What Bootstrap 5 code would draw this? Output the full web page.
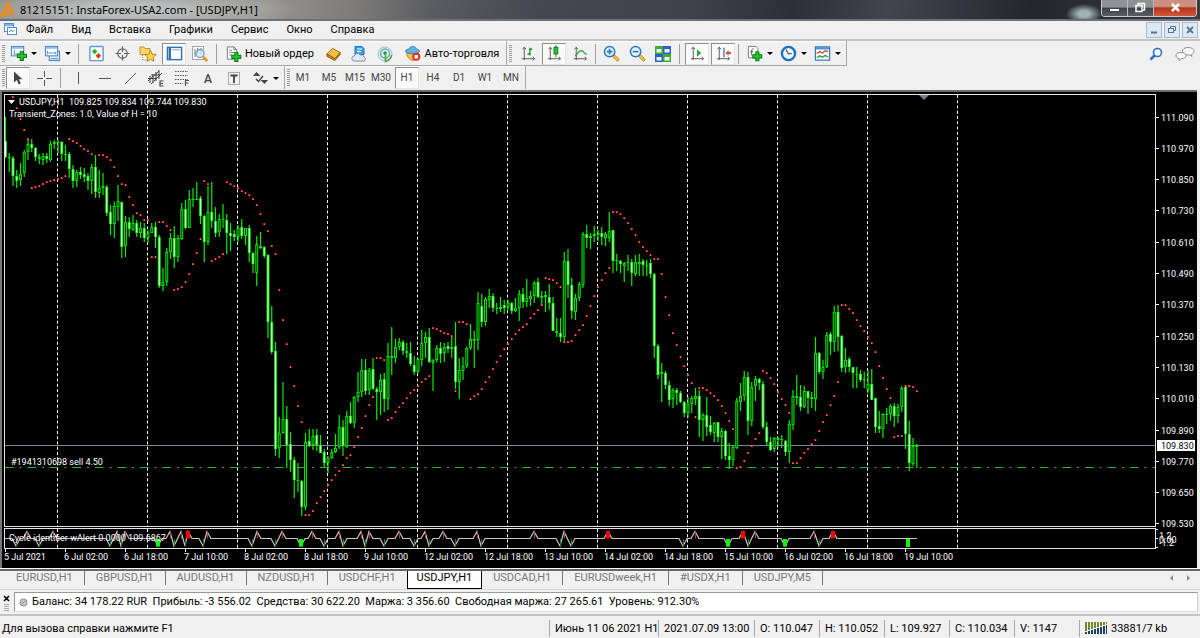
<!DOCTYPE html>
<html lang="ru">
<head>
<meta charset="utf-8">
<meta name="viewport" content="width=device-width, initial-scale=1">
<title>81215151: InstaForex-USA2.com - [USDJPY,H1]</title>
<link href="https://cdn.jsdelivr.net/npm/bootstrap@5.3.0/dist/css/bootstrap.min.css" rel="stylesheet">
<style>
  :root { --face: #f0f0f0; --edge: #a8a8a8; --ui: Roboto, "Noto Sans", sans-serif; --num: Roboto, "Liberation Sans", sans-serif; }
  body { background: var(--face); color: #000; font: 11px/14px var(--ui); overflow-x: hidden; }
  button { font: inherit; color: inherit; background: none; border: 0; padding: 0; border-radius: 0; }
  svg { display: block; flex: none; }

  .titlebar { height: 21px; border-bottom: 2px solid #6d7076; overflow: hidden; color: #000;
    background: radial-gradient(ellipse 18px 10px at 1084px 14px, #9fb3b3 0 30%, transparent),
      radial-gradient(ellipse 170px 20px at 130px 10px, #c4c8c9cc 30%, transparent),
      linear-gradient(100deg, #8d8c88 0, #97958f 22%, #7b7a79 30%, #5b5c60 36%, #43474f 45%, #3e434d 57%, #2c2f38 66%, #41454d 74%, #24262d 86%, #3a3c42 100%); }
  .titlebar .caption { font: 11px/20px "Noto Sans", "Open Sans", sans-serif; white-space: pre; }
  .winbtns { height: 17px; border: 1px solid #c5c9ce; border-top: 0; border-radius: 0 0 4px 4px; overflow: hidden; margin-right: 3px; }
  .winbtns button { width: 26px; background: linear-gradient(#8f9196 0 45%, #3f4147 50%, #5a5d63); border-right: 1px solid #b6bac0; }
  .winbtns button:last-child { width: 42px; border: 0; background: linear-gradient(#cc8f82 0 40%, #b5361c 50%, #d4563a); }

  .menubar { height: 20px; border-bottom: 2px solid #c3c3c3; padding-left: 3px; }
  .menubar a { color: #000; text-decoration: none; line-height: 18px; }
  .menulist { gap: 18px; }
  .mdi { gap: 2px; margin: 1px 2px 0 0; }
  .mdi button { width: 16px; height: 16px; background: #dbe8f5; border: 1px solid #a9bccd; }

  .toolrow { height: 25px; }
  .toolrow.lower { height: 24px; }
  .toolset { height: 25px; border: 1px solid var(--edge); border-width: 0 1px 1px 0; padding: 1px 2px 0 2px; box-shadow: inset 0 1px #fff; }
  .toolset.second { border-bottom: 0; height: 23px; }
  .toolgroup { gap: 2px; }
  .grip { width: 3px; height: 18px; margin-right: 1px; background: repeating-linear-gradient(#9b9b9b 0 1px, #f0f0f0 1px 2px); }
  .tb { width: 24px; height: 22px; display: inline-flex; align-items: center; justify-content: center; flex: none; border: 1px solid transparent; }
  .tb.drop { width: 34px; gap: 4px; }
  .tb.drop::after { content: ""; border: 3px solid transparent; border-top-color: #000; border-bottom: 0; }
  .tb.order { width: 95px; gap: 3px; white-space: nowrap; }
  .tb.auto { width: 105px; gap: 4px; white-space: nowrap; }
  .tb.chat { width: 30px; }
  .tb.on { background: #fafafa; border-color: #8f8f8f #e4e4e4 #e4e4e4 #8f8f8f; }
  .tb.period { font: 10px/12px var(--num); color: #444; }
  .rule { width: 1px; height: 20px; background: #a0a0a0; margin: 0 3px; flex: none; }
  .rule.wide { margin: 0 5px 0 4px; }

  .chart { background: #000; border-left: 2px solid #777; border-top: 2px solid #6c6c6c; padding: 2px 0 0 2px; margin-right: 3px; font: 9px/11px var(--num); color: #fff; }
  .chart svg { width: 100%; overflow: hidden; }
  .chart text { fill: #fff; font: 9px var(--num); white-space: pre; }
  .frame { border: 1px solid #e4e4e4; }
  .frame + .frame { margin-top: 1px; }
  .scale { width: 41px; flex: none; }
  .chart .scale text.now { fill: #000; }
  .grid line { stroke: #fff; stroke-dasharray: 3 2.25; }
  .edge { height: 3px; background: linear-gradient(#fff 0 1px, #666 1px 3px); }

  .tabs { height: 19px; border-bottom: 1px solid #d9d9d9; padding-left: 5px; }
  .tabs button { height: 14px; padding: 0 11px; color: #777; line-height: 14px; border-right: 1px solid #777; white-space: nowrap; }
  .tabs button.open { height: 18px; background: #fff; color: #000; border: 1px solid #000; border-top: 0; padding: 0 9px 3px; }
  .tabs .noedge { border-right: 0; }
  .account { height: 26px; border-bottom: 2px solid #c4c4c4; padding: 2px 2px 2px 0; }
  .account .sheet { background: #fff; border: 1px solid #999; border-right-color: #ccc; border-bottom-color: #ddd; padding-left: 4px; white-space: pre; }
  .status { height: 24px; }
  .status > div { border-left: 1px solid #a8a8a8; height: 17px; padding-left: 5px; line-height: 17px; white-space: nowrap; }
  .status > div:first-child { border: 0; padding-left: 2px; }
  .w-a { width: 109px; } .w-b { width: 96px; } .w-c { width: 65px; } .w-d { width: 121px; }
</style>
</head>
<body>
<svg width="0" height="0" class="position-absolute" aria-hidden="true">
  <symbol id="plus" viewBox="0 0 10 10"><path d="M3.5.5h3v3h3v3h-3v3h-3v-3h-3v-3h3z" fill="#22c52b" stroke="#087a10"/></symbol>
  <symbol id="axes" viewBox="0 0 18 18"><path d="M4.500 2v14M2 14.500h13M2.500 4.500l2-2 2 2M13.500 12.500l2 2-2 2" fill="none" stroke="#555"/></symbol>
  <symbol id="newchart" viewBox="0 0 18 18"><rect x="1.500" y="1.500" width="13" height="10" fill="#fff" stroke="#3c7eb8"/><path d="M2 3h12" stroke="#8fc0e8" stroke-width="2"/><path d="M4 9.500h8M4.500 5v5" stroke="#4b88bb"/><use href="#plus" x="7" y="6" width="11" height="11"/></symbol>
  <symbol id="profiles" viewBox="0 0 18 18"><rect x="5.500" y="6.500" width="11" height="10" fill="#dcecfb" stroke="#3c7eb8"/><rect x="1.500" y="1.500" width="13" height="10" fill="#fff" stroke="#3c7eb8"/><path d="M2 3h12" stroke="#8fc0e8" stroke-width="2"/><path d="M3.500 8.500h9M3.500 6v4M12.500 7v3M7 14.500h8" stroke="#4b88bb"/></symbol>
  <symbol id="market" viewBox="0 0 18 18"><rect x="2" y="1.500" width="14" height="15" rx="1" fill="#fff" stroke="#5b9bd5" stroke-width="1.500"/><path d="M7 4l3 3-3 3-3-3z" fill="#2db52d"/><path d="M11 8.500l3 3-3 3-3-3z" fill="#d8421c"/></symbol>
  <symbol id="target" viewBox="0 0 18 18"><circle cx="9" cy="9" r="5" fill="none" stroke="#666" stroke-width="1.300"/><path d="M9 1.500v6M9 10.500v6M1.500 9h6M10.500 9h6" stroke="#666" stroke-width="1.300"/></symbol>
  <symbol id="navigator" viewBox="0 0 18 18"><path d="M1 2h4l1 1.500h5v6H1z" fill="#f7d66a" stroke="#c4952a"/><path d="M3.500 10v5h4" stroke="#888" stroke-dasharray="1 1" fill="none"/><path d="M11.500 5.500l1.700 3.600 4 .5-3 2.700.8 4-3.500-2-3.500 2 .8-4-3-2.700 4-.5z" fill="#fbd54e" stroke="#b98315"/></symbol>
  <symbol id="terminal" viewBox="0 0 18 18"><rect x="1.500" y="2.500" width="15" height="13" fill="#fff" stroke="#2f71b5" stroke-width="1.500"/><path d="M4 3v12" stroke="#2f71b5" stroke-width="2.500"/><path d="M6 5h9" stroke="#9cc3e8" stroke-width="1.500"/></symbol>
  <symbol id="tester" viewBox="0 0 18 18"><rect x="1.500" y="1.500" width="11" height="13" fill="#fff" stroke="#a5a5a5"/><path d="M4 4v8M6.500 3v6M10 3v7" stroke="#5585ad"/><circle cx="9" cy="8.500" r="4" fill="#cfe8fbbb" stroke="#7c9cba" stroke-width="1.300"/><path d="M12.200 12l4 4" stroke="#d59a22" stroke-width="2.600"/></symbol>
  <symbol id="order" viewBox="0 0 18 18"><path d="M2.500 1.500h7l3 3v10h-10z" fill="#fff" stroke="#777"/><path d="M9.500 1.500v3h3M4.500 5h3M4.500 7.500h5M4.500 10h3" fill="none" stroke="#777"/><use href="#plus" x="6.500" y="6.500" width="11" height="11"/></symbol>
  <symbol id="book" viewBox="0 0 18 18"><path d="M2 9.500L8 3.500l8 4.500-5.500 6.500z" fill="#f4bf45" stroke="#9c6b16"/><path d="M2 9.500v2.500l8.500 4.500 5.500-6.500V8l-5.500 6.500z" fill="#c78b22" stroke="#8a5b10"/></symbol>
  <symbol id="cloud" viewBox="0 0 18 18"><path d="M5 1.500h7l2 2v6H5z" fill="#3ba0e8" stroke="#1e6fb5"/><path d="M7 4h5M7 6.500h4" stroke="#fff"/><path d="M4.500 16a2.500 2.500 0 0 1-.3-5A3.500 3.500 0 0 1 10.500 10a3 3 0 0 1 3.600 2A2.200 2.200 0 0 1 14 16z" fill="#e2e8f1" stroke="#7c91aa"/></symbol>
  <symbol id="signal" viewBox="0 0 18 18"><circle cx="9" cy="9" r="7" fill="#dff0e8" stroke="#9bbfd0"/><circle cx="9" cy="8.500" r="4.500" fill="none" stroke="#6fa8c8" stroke-width="1.500"/><circle cx="9" cy="8" r="1.800" fill="#3b8a38"/><path d="M9.500 9v7.500c3-1 6-2.500 6-6.500" fill="none" stroke="#58a545" stroke-width="1.700"/></symbol>
  <symbol id="robot" viewBox="0 0 18 18"><path d="M3 8c0 5 3 8 7 8.500l5-4V8z" fill="#f3c44b" stroke="#b08220"/><path d="M1.500 7c0-2 2-2.500 3.500-2.500C6 2 8 1.500 9 1.500s3.500.5 4.300 3c1.700 0 3.200 1 3.200 2.500-3 3-12 3-15 0z" fill="#62b2e0" stroke="#2e7cae"/><circle cx="13" cy="12.500" r="4.300" fill="#dd3520"/><rect x="11.200" y="10.700" width="3.600" height="3.600" fill="#fff"/></symbol>
  <symbol id="bars" viewBox="0 0 18 18"><use href="#axes"/><path d="M10.500 3v8M8 9.500h2.500M10.500 4.500H13" stroke="#1c8c24" stroke-width="1.400"/></symbol>
  <symbol id="candle" viewBox="0 0 18 18"><use href="#axes"/><path d="M10.500 0v13" stroke="#117a18"/><rect x="8.500" y="2.500" width="4" height="7" fill="#2ac634" stroke="#117a18"/></symbol>
  <symbol id="linec" viewBox="0 0 18 18"><use href="#axes"/><path d="M3.500 11.500C6 9 7.500 5.500 10 6c2 .5 3 3 5.500 4" fill="none" stroke="#23a02d" stroke-width="1.300"/></symbol>
  <symbol id="zoomin" viewBox="0 0 18 18"><path d="M10.500 10.500l6 6" stroke="#b8821a" stroke-width="3.400"/><path d="M10.500 10.500l5.500 5.500" stroke="#f3c94d" stroke-width="1.800"/><circle cx="7" cy="7" r="5.500" fill="#dff0fc" stroke="#2e78b8" stroke-width="1.500"/><path d="M4 7h6M7 4v6" stroke="#2e78b8" stroke-width="1.700"/></symbol>
  <symbol id="zoomout" viewBox="0 0 18 18"><path d="M10.500 10.500l6 6" stroke="#b8821a" stroke-width="3.400"/><path d="M10.500 10.500l5.500 5.500" stroke="#f3c94d" stroke-width="1.800"/><circle cx="7" cy="7" r="5.500" fill="#dff0fc" stroke="#2e78b8" stroke-width="1.500"/><path d="M4 7h6" stroke="#2e78b8" stroke-width="1.700"/></symbol>
  <symbol id="tile" viewBox="0 0 18 18"><path d="M1 1h8v8H1zM9 9h8v8H9z" fill="#42ab2c"/><path d="M9 1h8v8H9zM1 9h8v8H1z" fill="#2a62cc"/><path d="M2.500 4h5v3.500h-5zM10.500 4h5v3.500h-5zM2.500 12h5v3.500h-5zM10.500 12h5v3.500h-5z" fill="#e8f1ff"/></symbol>
  <symbol id="scroll" viewBox="0 0 18 18"><use href="#axes"/><path d="M8.500 4.500l4.500 4-4.500 4z" fill="#25ad2e"/></symbol>
  <symbol id="shift" viewBox="0 0 18 18"><use href="#axes"/><path d="M9.500 3v10" stroke="#2873b8" stroke-width="1.300"/><path d="M11 8.500l3.500-3v2H17v2h-2.500v2z" fill="#d4532a"/></symbol>
  <symbol id="indic" viewBox="0 0 18 18"><path d="M2.500 1.500h8l2 2v10h-10z" fill="#fff" stroke="#777"/><path d="M8 4c-2 0-2 1-2 3v4M4.500 7h3" fill="none" stroke="#555"/><use href="#plus" x="6.500" y="6.500" width="11" height="11"/></symbol>
  <symbol id="clock" viewBox="0 0 18 18"><circle cx="9" cy="9" r="7" fill="#eaf5ff" stroke="#1f6fbe" stroke-width="2.500"/><path d="M6.500 5l2.500 4.500 3.500-.5" fill="none" stroke="#444" stroke-width="1.200"/></symbol>
  <symbol id="template" viewBox="0 0 18 18"><rect x="1.500" y="2" width="15" height="14" fill="#fff" stroke="#3679b8" stroke-width="1.300"/><path d="M2 3.500h14" stroke="#4a95da" stroke-width="2.500"/><path d="M3 9l3-2 3 1.500 3-2.500 3 1" fill="none" stroke="#c9482a" stroke-width="1.400"/><path d="M3 13.500l3-2 3 1.500 3-2 3 2" fill="none" stroke="#2b9d3a" stroke-width="1.400"/></symbol>
</svg>

<header class="titlebar d-flex align-items-start">
  <svg width="16" height="19" viewBox="0 0 16 19" class="me-1"><path d="M2 17L7 4h2l4 10" fill="none" stroke="#f08a1a" stroke-width="2.600"/><path d="M0 15.500l14-2.500M5 11l5-1" stroke="#f08a1a" stroke-width="2"/></svg>
  <span class="caption flex-grow-1">81215151: InstaForex-USA2.com - [USDJPY,H1]</span>
  <div class="winbtns d-flex">
    <button type="button" aria-label="Свернуть"><svg width="25" height="16"><rect x="7.500" y="8.500" width="10" height="3" fill="#fff" stroke="#444"/></svg></button>
    <button type="button" aria-label="Развернуть"><svg width="25" height="16" fill="none" stroke="#fff" stroke-width="1.500"><path d="M10 5V3.500h6.500V10H15"/><rect x="8" y="5.500" width="6" height="6"/></svg></button>
    <button type="button" aria-label="Закрыть"><svg width="42" height="16"><path d="M18 4l7 7M25 4l-7 7" stroke="#fff" stroke-width="2.600"/></svg></button>
  </div>
</header>

<nav class="menubar d-flex align-items-start">
  <svg width="15" height="17" viewBox="0 0 15 17" class="me-2"><rect x="1.500" y="2.500" width="9" height="8" fill="#fff" stroke="#4c8fd4"/><path d="M2 4h8" stroke="#7ab4ea" stroke-width="2"/><rect x="4.500" y="6.500" width="9" height="7" fill="#fff" stroke="#4c8fd4"/><path d="M6 11l2-2 1.500 2 2-2" fill="none" stroke="#4c8fd4"/></svg>
  <div class="menulist d-flex flex-grow-1">
    <a href="#">Файл</a><a href="#">Вид</a><a href="#">Вставка</a><a href="#">Графики</a><a href="#">Сервис</a><a href="#">Окно</a><a href="#">Справка</a>
  </div>
  <div class="mdi d-flex">
    <button type="button" aria-label="Свернуть окно"><svg width="14" height="14"><path d="M4 9.500h6" stroke="#5c7488" stroke-width="2"/></svg></button>
    <button type="button" aria-label="Восстановить окно"><svg width="14" height="14" fill="none" stroke="#5c7488"><path d="M5.500 5V3.500h5v4H9"/><rect x="3.500" y="5.500" width="5" height="4"/></svg></button>
    <button type="button" aria-label="Закрыть окно"><svg width="14" height="14"><path d="M4 4l6 6M10 4l-6 6" stroke="#5c7488" stroke-width="1.800"/></svg></button>
  </div>
</nav>

<div class="toolrow d-flex">
  <div class="toolset d-flex align-items-center">
    <span class="grip"></span>
    <button type="button" class="tb drop" aria-label="Новый график"><svg width="17" height="17"><use href="#newchart"/></svg></button>
    <button type="button" class="tb drop" aria-label="Профили"><svg width="17" height="17"><use href="#profiles"/></svg></button>
    <span class="rule wide"></span>
    <div class="toolgroup d-flex">
      <button type="button" class="tb" aria-label="Обзор рынка"><svg width="17" height="17"><use href="#market"/></svg></button>
      <button type="button" class="tb" aria-label="Окно данных"><svg width="17" height="17"><use href="#target"/></svg></button>
      <button type="button" class="tb" aria-label="Навигатор"><svg width="18" height="18"><use href="#navigator"/></svg></button>
      <button type="button" class="tb on" aria-label="Терминал"><svg width="17" height="17"><use href="#terminal"/></svg></button>
      <button type="button" class="tb" aria-label="Тестер"><svg width="18" height="18"><use href="#tester"/></svg></button>
    </div>
    <span class="rule wide"></span>
    <button type="button" class="tb order"><svg width="17" height="18"><use href="#order"/></svg>Новый ордер</button>
    <div class="toolgroup d-flex ms-1">
      <button type="button" class="tb" aria-label="MetaEditor"><svg width="17" height="17"><use href="#book"/></svg></button>
      <button type="button" class="tb" aria-label="Облако"><svg width="18" height="18"><use href="#cloud"/></svg></button>
      <button type="button" class="tb" aria-label="Сигналы"><svg width="18" height="18"><use href="#signal"/></svg></button>
      <button type="button" class="tb auto"><svg width="17" height="17"><use href="#robot"/></svg>Авто-торговля</button>
    </div>
  </div>
  <div class="toolset d-flex align-items-center">
    <span class="grip me-1"></span>
    <div class="toolgroup d-flex">
      <button type="button" class="tb" aria-label="Бары"><svg width="17" height="17"><use href="#bars"/></svg></button>
      <button type="button" class="tb on" aria-label="Японские свечи"><svg width="17" height="17"><use href="#candle"/></svg></button>
      <button type="button" class="tb" aria-label="Линия"><svg width="17" height="17"><use href="#linec"/></svg></button>
    </div>
    <span class="rule"></span>
    <div class="toolgroup d-flex">
      <button type="button" class="tb" aria-label="Увеличить"><svg width="17" height="17"><use href="#zoomin"/></svg></button>
      <button type="button" class="tb" aria-label="Уменьшить"><svg width="17" height="17"><use href="#zoomout"/></svg></button>
      <button type="button" class="tb" aria-label="Окна мозаикой"><svg width="18" height="18"><use href="#tile"/></svg></button>
    </div>
    <span class="rule wide"></span>
    <div class="toolgroup d-flex">
      <button type="button" class="tb on" aria-label="Автопрокрутка"><svg width="17" height="17"><use href="#scroll"/></svg></button>
      <button type="button" class="tb on" aria-label="Сдвиг графика"><svg width="17" height="17"><use href="#shift"/></svg></button>
    </div>
    <span class="rule"></span>
    <button type="button" class="tb drop" aria-label="Индикаторы"><svg width="17" height="17"><use href="#indic"/></svg></button>
    <button type="button" class="tb drop" aria-label="Периоды"><svg width="17" height="17"><use href="#clock"/></svg></button>
    <button type="button" class="tb drop" aria-label="Шаблоны"><svg width="17" height="17"><use href="#template"/></svg></button>
  </div>
  <div class="toolgroup d-flex align-items-center ms-auto">
    <button type="button" class="tb" aria-label="Поиск"><svg width="14" height="14"><circle cx="8.500" cy="5.500" r="4" fill="#fff" stroke="#2a6fd6" stroke-width="1.600"/><path d="M5.500 8.500L1.500 12.500" stroke="#2a6fd6" stroke-width="2.600"/></svg></button>
    <button type="button" class="tb chat" aria-label="Чат"><svg width="20" height="16" fill="#fafafa" stroke="#8c8c8c"><path d="M13 1.500c3.500 0 6 1.500 6 3.700 0 1.500-1 2.500-2.500 3.200l.5 2-2.500-1.500C10 9 7.500 8 7.500 5.200c0-2.200 2-3.700 5.500-3.700z"/><path d="M6 6.500c3 0 5 1 5 3s-2 3.200-4.500 3.200L4 14.500v-2c-2-.5-3-1.500-3-3 0-2 2-3 5-3z"/></svg></button>
  </div>
</div>

<div class="toolrow lower d-flex">
  <div class="toolset second d-flex align-items-center">
    <span class="grip"></span>
    <div class="toolgroup d-flex">
      <button type="button" class="tb on" aria-label="Курсор"><svg width="16" height="16"><path d="M4 1.500v11l2.800-2.500 2 4.500 2-1-2-4.300h3.700z" fill="#444"/></svg></button>
      <button type="button" class="tb" aria-label="Перекрестие"><svg width="16" height="16"><path d="M8.500 1v6M8.500 10v6M1 8.500h6M10 8.500h6" stroke="#555"/></svg></button>
    </div>
    <span class="rule wide"></span>
    <div class="toolgroup d-flex">
      <button type="button" class="tb" aria-label="Вертикальная линия"><svg width="16" height="16"><path d="M8.500 2v12" stroke="#555"/></svg></button>
      <button type="button" class="tb" aria-label="Горизонтальная линия"><svg width="16" height="16"><path d="M3 8.500h12" stroke="#555"/></svg></button>
      <button type="button" class="tb" aria-label="Трендовая линия"><svg width="16" height="16"><path d="M3 14L14 3" stroke="#555"/></svg></button>
      <button type="button" class="tb" aria-label="Канал"><svg width="18" height="18" fill="none" stroke="#444"><path d="M1 12L12 2M4 15L15 4M3 7v7M6 5v9M9 3v9M12 1v9M1 9.500h9M4 6h9"/><path d="M16.500 12h-3.500v5h3.500M13 14.500h3" stroke-width="1.200"/></svg></button>
      <button type="button" class="tb" aria-label="Фибоначчи"><svg width="18" height="18" fill="none" stroke="#555"><path d="M2 2.500h13M2 6.500h13M2 10.500h13M2 14.500h8" stroke-dasharray="1.500 1"/><path d="M12.500 17v-5.500H16M12.500 14H15.500" stroke-width="1.200"/></svg></button>
      <button type="button" class="tb" aria-label="Текст"><svg width="16" height="16"><text x="4" y="13" font-size="12" font-weight="500" fill="#444">A</text></svg></button>
      <button type="button" class="tb" aria-label="Метка"><svg width="16" height="16"><rect x="2.500" y="2.500" width="11" height="12" fill="none" stroke="#666" stroke-dasharray="1 1"/><path d="M4.500 5.500h7M8 5v8" stroke="#444" stroke-width="1.800"/></svg></button>
      <button type="button" class="tb drop" aria-label="Стрелки"><svg width="17" height="16"><path d="M4.500 2l4 4H1zM12.500 14l-4-4H16z" fill="#444"/><path d="M4 9l2.500 2.500L11 6" fill="none" stroke="#444" stroke-width="1.500"/></svg></button>
    </div>
  </div>
  <div class="toolset second d-flex align-items-center">
    <span class="grip"></span>
    <div class="toolgroup d-flex">
      <button type="button" class="tb period">M1</button><button type="button" class="tb period">M5</button><button type="button" class="tb period">M15</button><button type="button" class="tb period">M30</button><button type="button" class="tb period on">H1</button><button type="button" class="tb period">H4</button><button type="button" class="tb period">D1</button><button type="button" class="tb period">W1</button><button type="button" class="tb period">MN</button>
    </div>
  </div>
</div>

<main class="chart d-flex">
  <div class="flex-grow-1">
    <div class="frame"><svg id="plot" height="431"></svg></div>
    <div class="frame"><svg id="cycle" height="19"></svg></div>
    <svg id="times" height="19"></svg>
  </div>
  <div class="scale"><svg id="scale" height="473"></svg></div>
</main>
<div class="edge"></div>

<div class="tabs d-flex align-items-start">
  <button type="button">EURUSD,H1</button><button type="button">GBPUSD,H1</button><button type="button">AUDUSD,H1</button><button type="button">NZDUSD,H1</button><button type="button" class="noedge">USDCHF,H1</button><button type="button" class="open">USDJPY,H1</button><button type="button">USDCAD,H1</button><button type="button">EURUSDweek,H1</button><button type="button">#USDX,H1</button><button type="button">USDJPY,M5</button>
  <svg width="34" height="14" class="ms-auto"><path d="M7 4v6L4 7zM21 4v6l3-3z" fill="#888"/></svg>
</div>

<section class="account d-flex">
  <svg width="14" height="20"><path d="M4 4l5 5M9 4l-5 5" stroke="#000" stroke-width="1.600"/><path d="M4 12.500h5M4 14.500h5M4 16.500h5M4 18.500h5" stroke="#aaa"/></svg>
  <div class="sheet flex-grow-1 d-flex align-items-center"><svg width="9" height="9" class="me-1"><circle cx="4.500" cy="4.500" r="3.500" fill="#ccc" stroke="#888"/><path d="M2.500 6.500l4-4" stroke="#888"/></svg><span>Баланс: 34 178.22 RUR  Прибыль: -3 556.02  Средства: 30 622.20  Маржа: 3 356.60  Свободная маржа: 27 265.61  Уровень: 912.30%</span></div>
</section>

<footer class="status d-flex align-items-center">
  <div class="flex-grow-1">Для вызова справки нажмите F1</div>
  <div class="w-a">Июнь 11 06 2021 H1</div>
  <div class="w-b">2021.07.09 13:00</div>
  <div class="w-c">O: 110.047</div>
  <div class="w-c">H: 110.052</div>
  <div class="w-c">L: 109.927</div>
  <div class="w-c">C: 110.034</div>
  <div class="w-c">V: 1147</div>
  <div class="w-d d-flex align-items-center gap-1"><svg id="net" width="22" height="14"></svg>33881/7 kb</div>
</footer>

<script src="https://cdn.jsdelivr.net/npm/bootstrap@5.3.0/dist/js/bootstrap.bundle.min.js"></script>
<script>
// Bars as high, low, body top, body bottom; "u" marks a rising bar.
const bars = `117 158 141 157|153 172 157 158|156 186 158 176|170 188 176 181|163 186 174 180 u|150 177 152 173 u|139 160 144 152 u|139 152 144 148|147 161 148 157|154 164 157 159|153 165 156 160 u|153 163 156 159|141 162 144 160 u|140 149 142 144 u|140 153 142 143|141 161 142 154|145 161 154 155|152 178 154 169|165 188 169 181|170 187 172 181 u|167 179 172 175|168 182 174 177|173 190 176 181|164 194 167 181 u|155 198 167 192|170 198 188 193 u|173 195 186 188 u|185 216 187 213|205 235 212 224|202 238 206 224 u|185 221 201 207 u|202 258 202 247|216 257 222 246 u|217 237 222 229|215 231 223 230 u|220 237 223 233|222 238 228 233 u|223 242 228 238|230 243 233 238 u|223 233 227 233 u|222 248 227 237|235 288 237 286|268 291 282 286 u|248 286 252 282 u|233 259 238 252 u|226 268 238 257|235 262 238 257 u|203 240 209 239 u|200 229 209 228|190 228 199 228 u|188 207 199 200|182 200 199 200|196 224 198 216|215 262 216 242|186 245 212 242 u|182 228 212 221|207 237 221 233|214 237 219 232 u|204 228 219 220|214 254 220 233|223 251 233 236|230 241 234 237|225 242 228 237 u|219 239 227 236|228 245 228 236 u|225 262 228 253|252 273 253 264|236 286 244 273 u|232 249 246 248|246 258 247 256|254 338 255 322|306 354 322 352|342 456 351 449|417 458 433 448 u|382 434 419 433 u|406 468 419 445|432 472 444 460|457 498 460 480|463 492 480 481|480 516 481 507|433 510 442 507 u|429 447 441 446|429 450 436 445 u|429 451 435 445|435 453 445 453|449 467 452 463|456 473 458 463 u|449 459 452 458 u|434 453 448 452 u|415 449 427 447 u|420 456 427 446|411 448 416 447 u|402 424 416 423|396 428 397 423 u|372 402 392 397 u|359 397 370 392 u|359 395 370 391|368 395 370 390 u|358 390 369 389|387 420 389 392|374 415 380 392 u|373 412 379 399|343 410 356 399 u|327 375 356 358|339 363 347 358 u|338 350 342 347 u|340 355 342 351|343 358 351 353|342 366 353 364|356 375 365 372|358 373 359 372 u|330 366 343 360 u|332 358 337 343 u|328 363 337 362|359 391 360 363 u|345 362 348 360 u|342 363 348 354|343 362 347 353 u|342 353 346 349|337 358 347 349|322 389 346 382|358 399 370 382 u|357 380 366 371 u|347 368 348 366 u|324 350 339 348 u|331 368 339 341|292 350 303 340 u|294 327 306 322|297 326 299 322 u|289 308 296 300 u|293 312 296 308|303 314 308 309|297 312 307 309|300 314 305 308|300 310 303 307 u|302 314 303 311|298 312 308 311 u|290 321 294 308 u|288 308 294 302|279 307 298 302 u|291 306 296 299 u|281 303 283 296 u|278 298 282 297|291 305 296 298 u|291 312 295 297|284 310 297 303|297 331 303 331|318 337 331 333|318 342 333 337|252 341 261 337 u|249 298 261 285|278 319 285 311|294 320 298 312 u|282 301 284 298 u|232 288 234 285 u|225 248 234 238|233 249 236 238 u|226 242 234 236 u|230 241 233 235 u|227 245 233 237|232 246 234 238 u|212 242 231 238 u|230 273 230 261|254 271 260 261|260 273 261 264|262 282 263 266 u|255 271 262 263|259 286 262 273|255 276 262 274 u|254 276 262 264|259 276 261 265|260 276 265 266|259 278 263 274|273 358 274 346|344 379 346 375|363 402 372 374 u|371 389 373 385|381 406 385 400|388 408 390 399 u|388 405 390 393|391 403 393 402|401 417 402 413|397 418 404 413 u|396 413 398 404 u|388 405 396 399 u|390 437 396 420|413 441 415 420 u|397 436 415 427|416 435 425 432|422 442 423 433 u|422 442 422 437|428 459 431 437 u|430 460 431 456|443 469 456 460|446 466 447 460 u|398 449 401 448 u|383 411 396 402 u|371 401 377 396 u|372 435 377 421|382 426 387 421 u|376 401 379 386 u|378 390 379 383|381 429 384 427|422 445 427 442|437 451 442 450|437 452 438 449 u|437 447 438 440|435 448 439 440|440 456 441 452|420 463 424 452 u|390 430 396 425 u|375 405 396 398|385 411 397 407|386 408 391 407 u|391 414 391 398|392 408 397 399|337 411 353 399 u|352 374 353 372|360 379 367 372 u|332 368 335 367 u|332 355 334 342|306 352 312 342 u|305 351 312 337|335 372 336 368|348 373 360 367 u|357 372 359 367|367 388 367 373|367 388 374 375|370 382 374 380|372 388 379 380|370 393 384 390 u|369 400 384 400|398 433 398 427|411 433 426 429|413 438 414 429 u|408 424 414 415|404 421 406 414 u|403 427 406 416|404 423 407 416 u|386 412 388 407 u|385 449 387 434|421 471 434 463|438 466 446 464 u|444 468 445 447 u`.split('|').map(s => s.split(' '));
// Transient zone marks, one per bar, from the third bar on.
const zones = [97,108,119,130,139,188,187,186,184,182,181,180,179,178,176,139,141,143,146,149,151,154,195,155,155,157,160,167,176,184,185,197,205,213,215,220,220,257,257,222,222,226,230,290,289,287,282,274,264,253,239,181,184,261,259,257,254,182,184,186,188,191,193,195,199,205,214,224,231,246,254,290,320,344,367,386,406,422,515,515,511,503,497,491,485,480,475,471,465,458,455,447,437,428,416,405,397,358,358,360,420,418,412,407,403,398,393,390,386,382,379,376,328,329,331,333,334,336,391,322,322,324,399,396,394,389,382,377,369,362,356,349,344,339,334,330,327,324,318,314,310,305,278,279,280,283,287,342,342,341,335,330,325,316,306,296,287,280,273,268,212,212,214,218,223,229,235,242,247,251,255,259,259,274,297,315,333,345,357,366,375,383,417,388,388,390,393,396,400,406,413,421,429,468,467,461,453,446,439,433,371,373,378,384,392,399,405,413,463,463,458,453,449,444,440,431,422,415,405,396,382,305,305,309,313,320,326,331,337,343,352,366,378,389,398,437,436,436,386,386,387,391];
const step = 3.75, top0 = 95;
let grid = '';
for (let x = 52.5; x < 960; x += 90) grid += `<line x1="${x}" x2="${x}" y1="0" y2="100%"/>`;

let out = `<g class="grid">${grid}</g><line x2="100%" y1="350.5" y2="350.5" stroke="#778899"/>
  <line x2="100%" y1="372.5" y2="372.5" stroke="#2fb52f" stroke-dasharray="8.5 6 2 6"/><g transform="translate(0 ${-top0})">`;
bars.forEach(([h, l, t, b, up], i) => {
  const x = step * i + .5, bh = Math.max(1, b - t);
  out += `<path d="M${x} ${h}V${l}" stroke="#00f000" stroke-width="1.2"/><rect x="${x - 1.5}" y="${t}" width="3" height="${bh}" fill="#00e000"/>`;
  if (bh > 2) out += `<rect x="${x - .5}" y="${+t + (up ? 1 : .5)}" width="1" height="${bh - (up ? 2 : 1)}" fill="${up ? '#003c00' : '#eaffea'}"/>`;
});
zones.forEach((y, k) => {
  const x = step * (k + 2) + .5;
  out += `<rect x="${x - 1}" y="${y - .8}" width="2" height="1.800" fill="#ff2020"/><rect x="${x - .5}" y="${y - .4}" width="1" height="1" fill="#ffb0a0"/>`;
});
out += `</g><path d="M3 5h7l-3.500 4z" fill="#fff"/><path d="M914 0h10l-5 5z" fill="#708090"/>
  <text x="14" y="10">USDJPY,H1  109.825 109.834 109.744 109.830</text>
  <text x="4" y="22">Transient_Zones: 1.0, Value of H = 10</text>
  <text x="6" y="370">#1941310698 sell 4.50</text>`;
plot.innerHTML = out;

// Cycle turns: x and kind (u/d minor, R/G strong).
const turns = '16d 27u 39d 53u 110d 117u 121d 125u 158G 170u 174d 181u 185d 188R 203d 207u 252d 257u 275d 282u 301G 312u 324d 339u 343d 361u 365d 369u 384d 399u 414d 425u 429d 443u 455d 477u 481d 534u 560d 564u 571d 608R 683d 695u 728G 743R 748d 755u 785G 814u 819d 833R'.split(' ').map(s => [parseInt(s) - 5, s.slice(-1)]);
let pts = '0,9.5', marks = '';
turns.forEach(([x, k], i) => {
  const upw = k === 'u' || k === 'R', y = upw ? 2.5 : 17;
  if (i === 0 || x - turns[i - 1][0] > 7) pts += ` ${x - 4},9.5`;
  pts += ` ${x},${y}`;
  if (i === turns.length - 1 || turns[i + 1][0] - x > 7) pts += ` ${x + 4},9.5`;
  const strong = k === 'R' || k === 'G', w = strong ? 4 : 1;
  marks += `<rect x="${x - w / 2 + (strong ? 0 : .5)}" y="${upw ? 2 : 10}" width="${w}" height="7.500" fill="${upw ? (strong ? '#f00' : '#a04040') : (strong ? '#0f0' : '#207a20')}"/>`;
});
marks += '<rect x="901" y="10" width="4" height="8" fill="#0f0"/>';
cycle.innerHTML = `<g class="grid">${grid}</g><polyline points="${pts} 912,9.5" fill="none" stroke="#c8c8c8" stroke-width="1.200"/>${marks}<text x="4" y="12">Cycle identifier wAlert 0.0000 109.6867</text>`;

times.innerHTML = ['5 Jul 2021','6 Jul 02:00','6 Jul 18:00','7 Jul 10:00','8 Jul 02:00','8 Jul 18:00','9 Jul 10:00','12 Jul 02:00','12 Jul 18:00','13 Jul 10:00','14 Jul 02:00','14 Jul 18:00','15 Jul 10:00','16 Jul 02:00','16 Jul 18:00','19 Jul 10:00']
  .map((t, k) => `<path d="M${60 * k + 1.5} 0v3" stroke="#fff"/><text x="${60 * k}" y="11">${t}</text>`).join('');

let sc = '';
for (let k = 0; k < 14; k++) {
  const y = Math.round(22.5 + k * 31.3);
  sc += `<path d="M0 ${y + .5}h3" stroke="#fff"/><text x="5" y="${y + 4}">${(111.09 - k * .12).toFixed(3)}</text>`;
}
sc += `<rect x="1" y="346" width="38" height="11" fill="#fff"/><text x="5" y="355" class="now">109.830</text>
  <text x="3" y="445">1.2</text><text x="3" y="449">0.00</text><text x="3" y="452">-1.2</text><path d="M0 435.500h2M0 444.500h2M0 453.500h2" stroke="#fff"/>`;
scale.innerHTML = sc;

let bits = '';
for (let k = 0; k < 8; k++) bits += `<rect x="${k * 3}" y="1" width="2" height="${9 - k}" fill="#6f8a2a"/><rect x="${k * 3}" y="${11 - k}" width="2" height="${2 + k}" fill="#1c3f66"/>`;
net.innerHTML = bits;
</script>
</body>
</html>
